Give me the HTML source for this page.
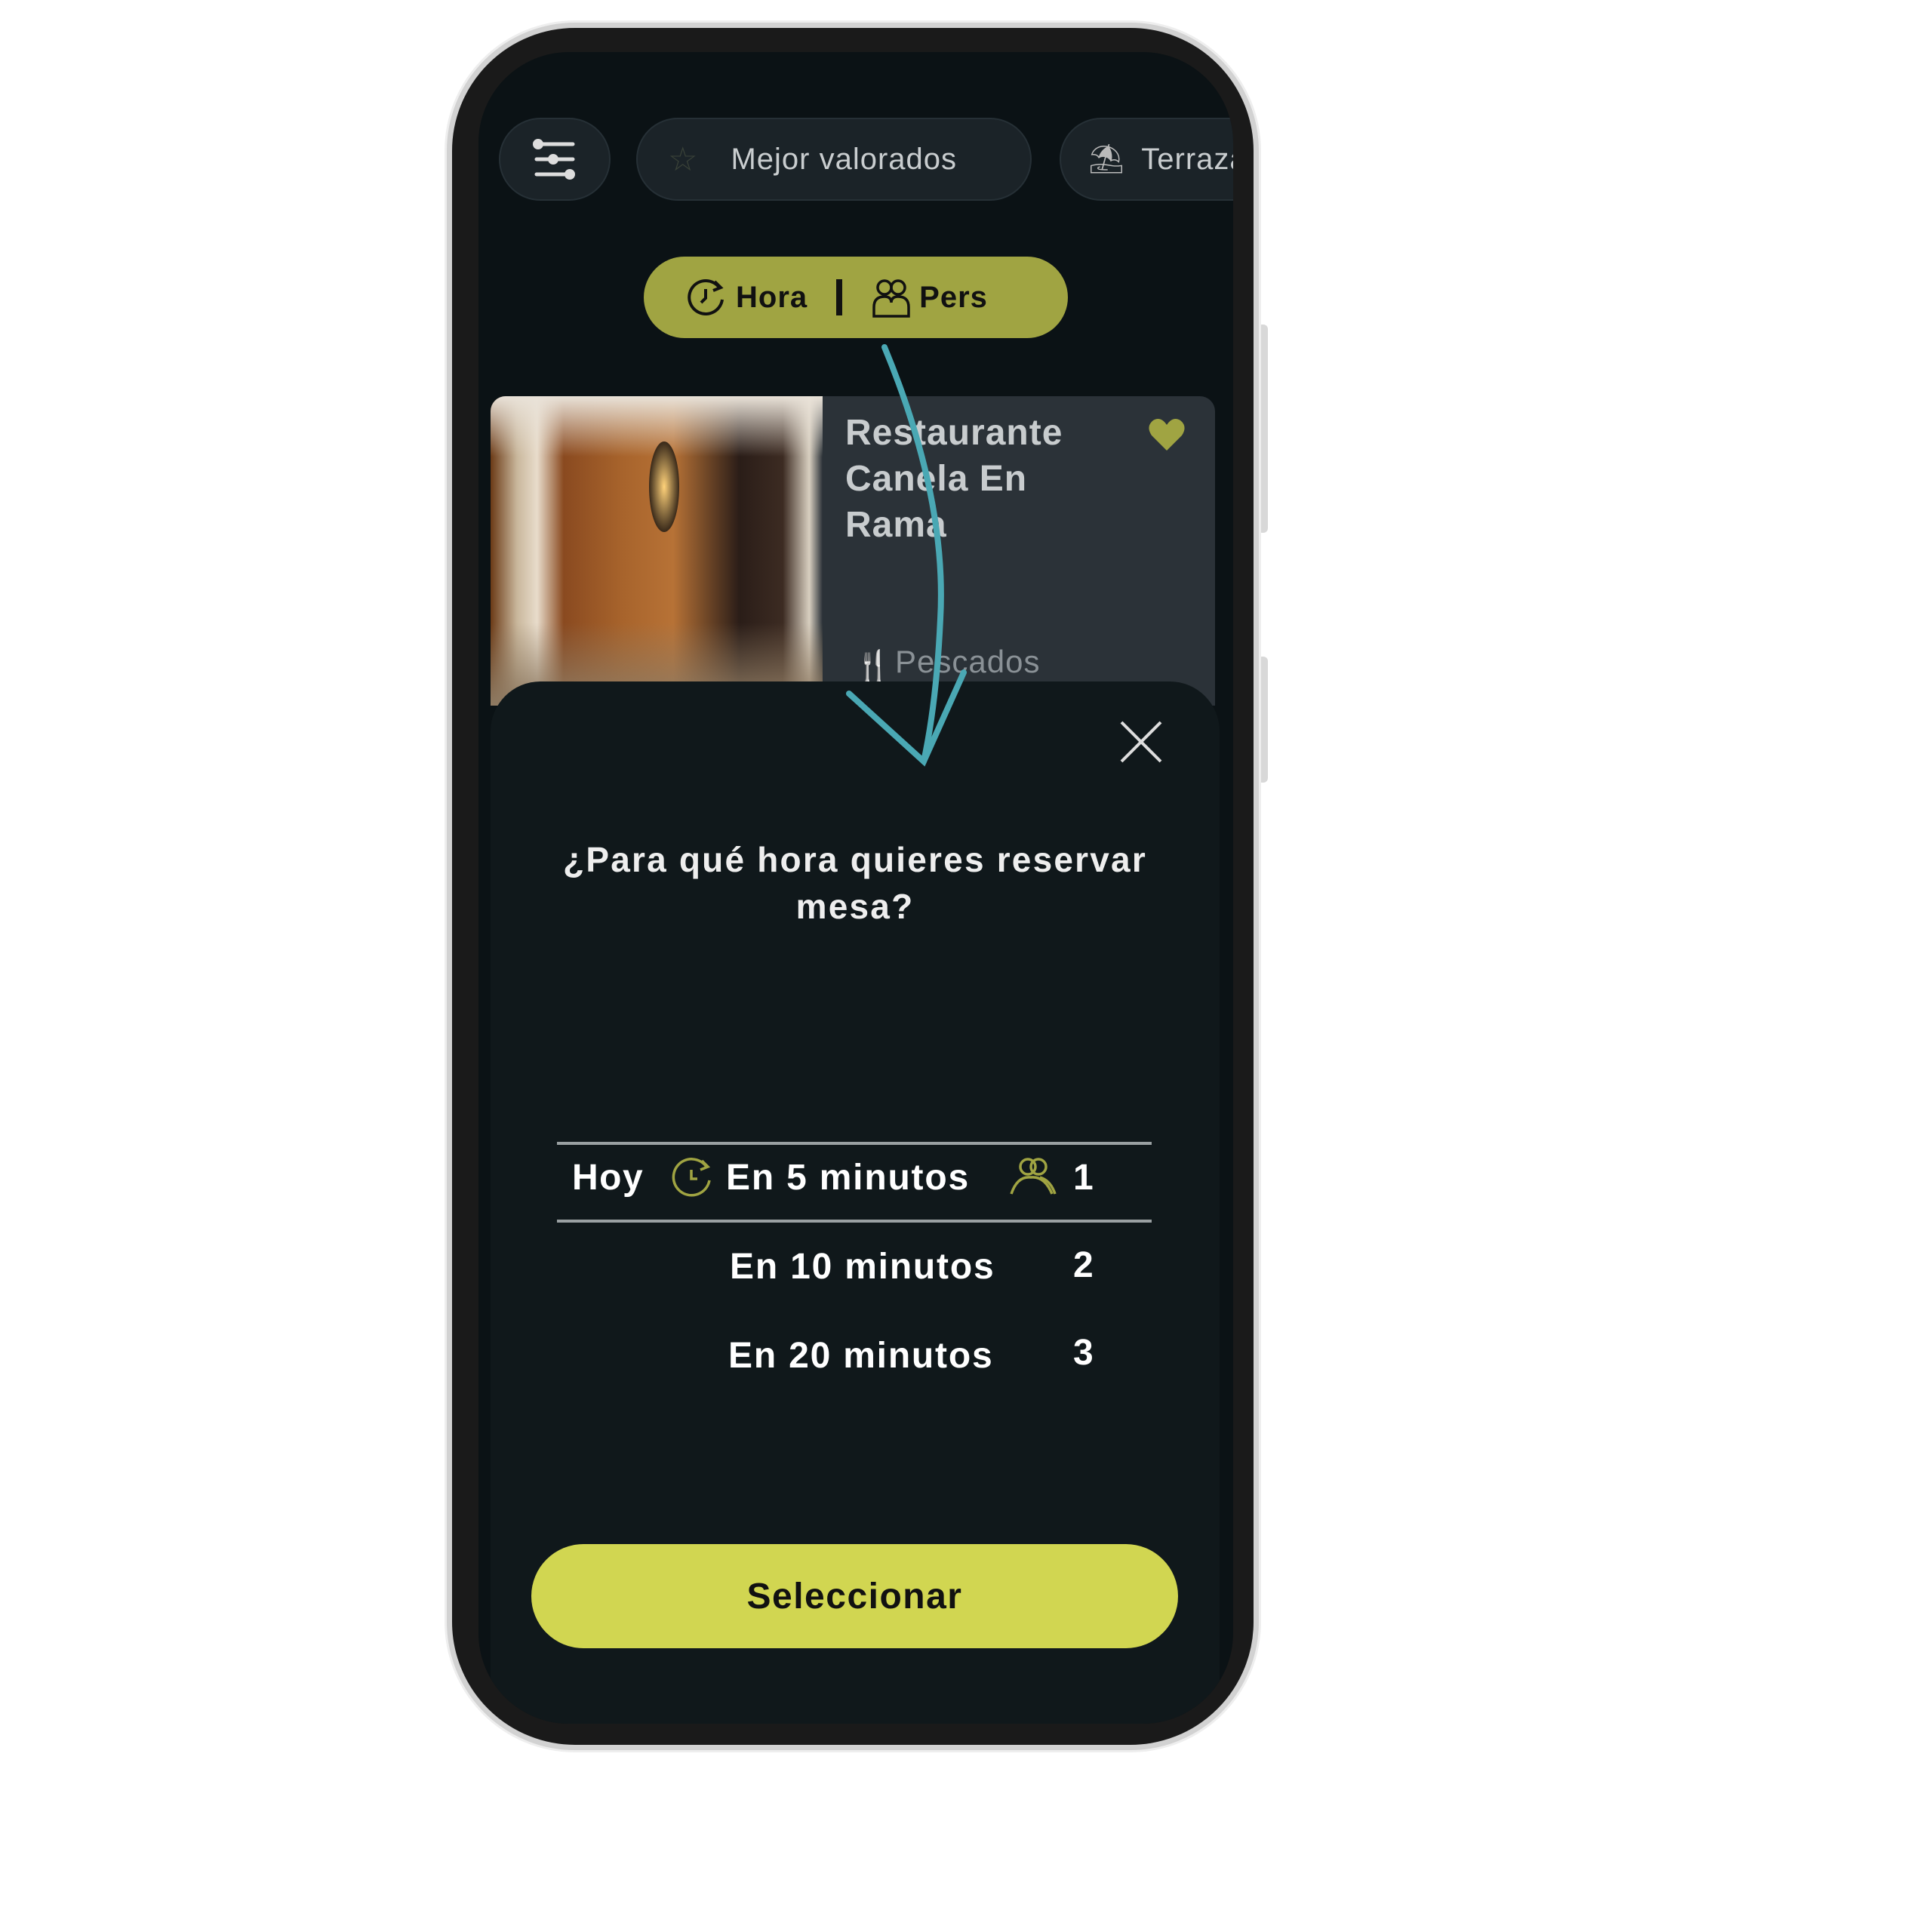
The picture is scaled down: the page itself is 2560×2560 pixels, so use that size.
<!DOCTYPE html>
<html><head><meta charset="utf-8"><style>
*{margin:0;padding:0;box-sizing:border-box}
body{width:2560px;height:2560px;background:#fff;position:relative;overflow:hidden;font-family:"Liberation Sans",sans-serif}
.abs{position:absolute}
.phone{left:592px;top:30px;width:1076px;height:2289px;border-radius:170px;background:#1a1a1a;border:7px solid #d2d2d2;box-shadow:0 0 0 3px #eee}
.screen{left:634px;top:69px;width:1000px;height:2215px;border-radius:120px;background:#0b1215;overflow:hidden}
.chip{background:#1b2328;border:2px solid #263036;border-radius:60px;color:#c9cdcf;font-size:40px;display:flex;align-items:center}
.t{color:#fff;font-weight:bold;white-space:nowrap}
</style></head><body>
<div class="abs" style="left:1666px;top:430px;width:14px;height:276px;background:#d8d8d8;border-radius:6px"></div>
<div class="abs" style="left:1666px;top:870px;width:14px;height:167px;background:#d8d8d8;border-radius:6px"></div>
<div class="abs phone"></div>
<div class="abs screen">
 <div class="abs chip" style="left:27px;top:87px;width:148px;height:110px;justify-content:center">
  <svg width="64" height="60" viewBox="0 0 64 60"><g stroke="#ddd" stroke-width="5" stroke-linecap="round"><line x1="8" y1="10" x2="56" y2="10"/><line x1="8" y1="30" x2="56" y2="30"/><line x1="8" y1="50" x2="56" y2="50"/></g><g fill="#ddd"><circle cx="10" cy="10" r="7"/><circle cx="30" cy="30" r="7"/><circle cx="52" cy="50" r="7"/></g></svg>
 </div>
 <div class="abs chip" style="left:209px;top:87px;width:524px;height:110px;padding-left:40px">
  <span style="color:#3a4238;font-size:44px">☆</span><span style="margin-left:44px;letter-spacing:1px">Mejor valorados</span>
 </div>
 <div class="abs chip" style="left:770px;top:87px;width:300px;height:110px;padding-left:36px">
  <span style="color:#bbb;font-size:38px">⛱</span><span style="margin-left:22px;letter-spacing:1px">Terraza</span>
 </div>
 <div class="abs" style="left:219px;top:271px;width:562px;height:108px;border-radius:54px;background:#a0a442;display:flex;align-items:center;padding-left:56px;font-size:40px;font-weight:bold;color:#111">
  <svg width="54" height="54" viewBox="0 0 54 54"><path d="M44 14 A22 22 0 1 0 48 30" fill="none" stroke="#111" stroke-width="4"/><path d="M38 6 L46 14 L36 18" fill="none" stroke="#111" stroke-width="4"/><path d="M26 16 V28 L20 34" fill="none" stroke="#111" stroke-width="4"/></svg>
  <span style="margin-left:12px;letter-spacing:1px">Hora</span>
  <span style="display:inline-block;width:8px;height:48px;background:#111;margin:0 38px"></span>
  <svg width="54" height="54" viewBox="0 0 54 54" fill="none" stroke="#111" stroke-width="3.5"><circle cx="18" cy="14" r="9"/><circle cx="36" cy="14" r="9"/><path d="M4 52 V40 Q4 26 18 26 Q27 26 27 34 Q27 26 36 26 Q50 26 50 40 V52 Z"/></svg>
  <span style="margin-left:10px;letter-spacing:1px">Pers</span>
 </div>
 <div class="abs" style="left:16px;top:456px;width:960px;height:410px;background:#2b3238;border-radius:20px 20px 0 0;overflow:hidden">
  <div class="abs" style="left:0;top:0;width:440px;height:410px;background:linear-gradient(90deg,#6b3a16 0%,#c9b79c 8%,#e8dccb 14%,#8a4a20 22%,#a8642c 40%,#b77236 55%,#2a1d18 75%,#3c2b22 88%,#d8cfc0 96%,#2b3238 100%)"></div>
  <div class="abs" style="left:0;top:0;width:440px;height:80px;background:linear-gradient(180deg,#e9e2d8,rgba(233,226,216,0))"></div>
  <div class="abs" style="left:0;top:300px;width:440px;height:110px;background:linear-gradient(180deg,rgba(120,80,40,0),#8e7a62)"></div>
  <div class="abs" style="left:210px;top:60px;width:40px;height:120px;background:radial-gradient(#ffd27a,#3a2a1a 70%);border-radius:50%"></div>
  <div class="abs t" style="left:470px;top:18px;font-size:48px;line-height:61px;color:#c8ccce;letter-spacing:1px">Restaurante<br>Canela En<br>Rama</div>
  <svg class="abs" style="left:870px;top:26px" width="52" height="48" viewBox="0 0 52 48"><path d="M26 46 L6 26 Q-2 14 8 6 Q18 0 26 12 Q34 0 44 6 Q54 14 46 26 Z" fill="#a0a442"/></svg>
  <div class="abs" style="left:482px;top:334px;width:44px;height:44px;color:#aab;font-size:40px">🍴</div>
  <div class="abs" style="left:536px;top:328px;font-size:42px;color:#8a9196;letter-spacing:1px">Pescados</div>
 </div>
 <div class="abs" style="left:16px;top:834px;width:966px;height:1500px;background:#10181b;border-radius:66px 66px 0 0"></div>
 <svg class="abs" style="left:850px;top:886px" width="56" height="56" viewBox="0 0 56 56" stroke="#ddd" stroke-width="4"><line x1="2" y1="2" x2="54" y2="54"/><line x1="54" y1="2" x2="2" y2="54"/></svg>
 <div class="abs t" style="left:0;width:998px;top:1039px;text-align:center;font-size:46px;line-height:62px;color:#eee;letter-spacing:2.2px">¿Para qué hora quieres reservar<br>mesa?</div>
 <div class="abs" style="left:104px;top:1444px;width:788px;height:4px;background:#9aa0a2"></div>
 <div class="abs" style="left:104px;top:1547px;width:788px;height:4px;background:#9aa0a2"></div>
 <div class="abs t" style="left:124px;top:1464px;font-size:48px;letter-spacing:1.5px">Hoy</div>
 <svg class="abs" style="left:256px;top:1463px" width="56" height="56" viewBox="0 0 56 56" fill="none" stroke="#a0a442" stroke-width="3.5"><path d="M46 14 A24 24 0 1 0 50 32"/><path d="M40 6 L48 14 L38 18"/><path d="M26 18 V30 H34"/></svg>
 <div class="abs t" style="left:328px;top:1464px;font-size:48px;letter-spacing:1.8px">En 5 minutos</div>
 <svg class="abs" style="left:704px;top:1463px" width="62" height="56" viewBox="0 0 62 56" fill="none" stroke="#a0a442" stroke-width="3.5"><circle cx="24" cy="14" r="10"/><circle cx="38" cy="14" r="10"/><path d="M2 50 Q10 26 28 28 Q46 26 56 50"/><path d="M40 28 Q54 32 60 50"/></svg>
 <div class="abs t" style="left:788px;top:1464px;font-size:48px">1</div>
 <div class="abs t" style="left:333px;top:1582px;font-size:48px;letter-spacing:1.8px">En 10 minutos</div>
 <div class="abs t" style="left:788px;top:1580px;font-size:48px">2</div>
 <div class="abs t" style="left:331px;top:1700px;font-size:48px;letter-spacing:1.8px">En 20 minutos</div>
 <div class="abs t" style="left:788px;top:1696px;font-size:48px">3</div>
 <div class="abs" style="left:70px;top:1977px;width:857px;height:138px;border-radius:69px;background:#d1d651;display:flex;align-items:center;justify-content:center;font-size:48px;font-weight:bold;color:#111;letter-spacing:1.5px">Seleccionar</div>
</div>
<svg class="abs" style="left:0;top:0" width="2560" height="2560" fill="none" stroke="#4aa8b4" stroke-width="8" stroke-linecap="round">
 <path d="M1172 460 Q1255 660 1246 820 Q1241 930 1224 1009"/>
 <path d="M1125 919 L1224 1009 L1277 891"/>
</svg>
</body></html>
